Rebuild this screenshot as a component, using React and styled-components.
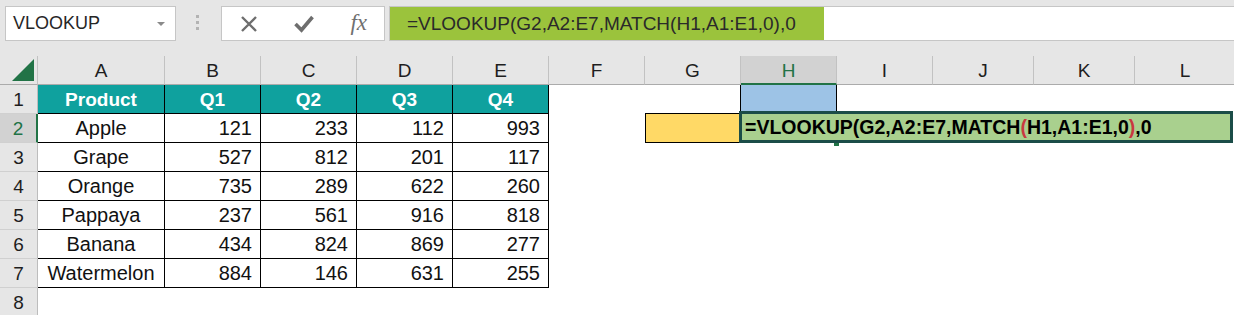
import React from "react";
import styled, { createGlobalStyle } from "styled-components";

const COLS = "38px 127px 96px 96px 96px 96px 96px 96px 96px 96px 101px 101px 101px";
const LETTERS = ["A", "B", "C", "D", "E", "F", "G", "H", "I", "J", "K", "L"];
const HEAD = ["Product", "Q1", "Q2", "Q3", "Q4"];
const DATA = [
	["Apple", 121, 233, 112, 993],
	["Grape", 527, 812, 201, 117],
	["Orange", 735, 289, 622, 260],
	["Pappaya", 237, 561, 916, 818],
	["Banana", 434, 824, 869, 277],
	["Watermelon", 884, 146, 631, 255],
];
const GREEN = "#217346";

const GlobalStyle = createGlobalStyle`
	body {
		margin: 0;
		background: #fff;
		font-family: "Liberation Sans", Arial, sans-serif;
	}
`

const Window = styled.div`
	width: 1234px;
	height: 315px;
	overflow: hidden;
	background: #fff;
`

const TopBar = styled.div`
	display: flex;
	align-items: flex-start;
	height: 56px;
	box-sizing: border-box;
	padding: 6px 0 0 5px;
	background: #e6e6e6;
`

const NameBox = styled.div`
	display: flex;
	align-items: center;
	justify-content: space-between;
	width: 171px;
	height: 35px;
	box-sizing: border-box;
	padding: 0 10px 0 7px;
	background: #fff;
	border: 1px solid #c6c6c6;
	font-size: 18px;
	color: #262626;
`

const Caret = styled.span`
	width: 0;
	height: 0;
	border-left: 4px solid transparent;
	border-right: 4px solid transparent;
	border-top: 4px solid #8a8a8a;
`

const Grip = styled.div`
	display: flex;
	flex-direction: column;
	gap: 3px;
	margin: 9px 22px 0 20px;
	span {
		width: 3px;
		height: 3px;
		background: #b3b3b3;
	}
`

const ActionBox = styled.div`
	display: flex;
	align-items: center;
	justify-content: space-between;
	width: 164px;
	height: 35px;
	box-sizing: border-box;
	padding: 0 17px 0 18px;
	background: #fff;
	border: 1px solid #c6c6c6;
	margin-right: 4px;
`

const Fx = styled.span`
	font-family: "Liberation Serif", "Times New Roman", serif;
	font-style: italic;
	font-size: 23px;
	color: #707070;
	line-height: 1;
	margin-top: -2px;
`

const FormulaBox = styled.div`
	flex: 1;
	height: 35px;
	box-sizing: border-box;
	background: #fff;
	border: 1px solid #c6c6c6;
	border-right: none;
`

const Highlight = styled.div`
	display: flex;
	align-items: center;
	width: 434px;
	height: 100%;
	box-sizing: border-box;
	padding-left: 17px;
	background: #9bc33c;
	font-size: 19px;
	color: #2a2a2a;
	white-space: nowrap;
`

const Sheet = styled.div`
	position: relative;
`

const Row = styled.div`
	display: grid;
	grid-template-columns: ${COLS};
	height: 29px;
`

const ColHead = styled.div`
	display: flex;
	align-items: center;
	justify-content: center;
	box-sizing: border-box;
	background: ${p => (p.$selected ? "#d2d2d2" : "#e6e6e6")};
	color: ${p => (p.$selected ? GREEN : "#1e1e1e")};
	border-right: 1px solid #c2c2c2;
	border-bottom: ${p => (p.$selected ? `2px solid ${GREEN}` : "1px solid #ababab")};
	font-size: 19px;
	padding-top: 2px;
`

const Corner = styled(ColHead)`
	align-items: flex-end;
	justify-content: flex-end;
	padding: 0 3px 3px 0;
	svg {
		display: block;
	}
`

const RowHead = styled.div`
	display: flex;
	align-items: center;
	justify-content: center;
	box-sizing: border-box;
	background: ${p => (p.$selected ? "#d2d2d2" : "#e6e6e6")};
	color: ${p => (p.$selected ? GREEN : "#1e1e1e")};
	border-right: ${p => (p.$selected ? `2px solid ${GREEN}` : "1px solid #bdbdbd")};
	border-bottom: 1px solid #d0d0d0;
	font-size: 19px;
	padding-top: 1px;
`

const fills = {
	head: "#0fa19e",
	yellow: "#ffd966",
	blue: "#9dc3e6",
};

const Cell = styled.div`
	display: flex;
	align-items: center;
	justify-content: ${p => (p.$align === "right" ? "flex-end" : "center")};
	box-sizing: border-box;
	padding: 1px 8px 0;
	background: ${p => fills[p.$kind] || "#fff"};
	color: ${p => (p.$kind === "head" ? "#fff" : "#111")};
	font-size: ${p => (p.$kind === "head" ? "19px" : "20px")};
	font-weight: ${p => (p.$kind === "head" ? 700 : 400)};
	white-space: nowrap;
	${p => (p.$kind === "head" || p.$kind === "data") && `
		border-right: 1px solid #000;
		border-bottom: 1px solid #000;
	`}
	${p => p.$kind === "yellow" && `
		border: 1px solid #000;
		margin-top: -1px;
	`}
	${p => p.$kind === "blue" && `
		border-left: 1px solid #000;
		border-right: 1px solid #000;
		margin-left: -1px;
	`}
`

const EditBox = styled.div`
	position: absolute;
	left: 739px;
	top: 55px;
	width: 494px;
	height: 32px;
	box-sizing: border-box;
	display: flex;
	align-items: center;
	padding: 1px 0 0 3px;
	background: #a9d08e;
	border: 3px solid #1b4d48;
	font-size: 19.5px;
	font-weight: 700;
	color: #000;
	white-space: nowrap;
`

const Paren = styled.span`
	color: #c9383f;
`

const FillHandle = styled.div`
	position: absolute;
	left: 834px;
	top: 87px;
	width: 5px;
	height: 3px;
	background: ${GREEN};
`

const CrossIcon = () => (
	<svg width="18" height="16" viewBox="0 0 18 16">
		<path d="M2 1 L16 15 M16 1 L2 15" stroke="#6e6e6e" strokeWidth="2.4" fill="none" />
	</svg>
)

const CheckIcon = () => (
	<svg width="20" height="18" viewBox="0 0 20 18">
		<path d="M1.5 9 L7.5 15 L18.5 2" stroke="#6e6e6e" strokeWidth="3.6" fill="none" strokeLinejoin="miter" />
	</svg>
)

const cellKind = (r, c) => {
	if (r === 1 && c < 5) return "head"
	if (r >= 2 && r <= 7 && c < 5) return "data"
	if (r === 1 && c === 7) return "blue"
	if (r === 2 && c === 6) return "yellow"
	return null
}

const cellText = (r, c) => {
	if (r === 1 && c < 5) return HEAD[c]
	if (r >= 2 && r <= 7 && c < 5) return DATA[r - 2][c]
	return ""
}

const App = () => {
	return (
		<Window>
			<GlobalStyle />
			<TopBar>
				<NameBox>
					VLOOKUP
					<Caret />
				</NameBox>
				<Grip>
					<span />
					<span />
					<span />
				</Grip>
				<ActionBox>
					<CrossIcon />
					<CheckIcon />
					<Fx>fx</Fx>
				</ActionBox>
				<FormulaBox>
					<Highlight>=VLOOKUP(G2,A2:E7,MATCH(H1,A1:E1,0),0</Highlight>
				</FormulaBox>
			</TopBar>
			<Sheet>
				<Row>
					<Corner>
						<svg width="22" height="22" viewBox="0 0 22 22">
							<polygon points="22,0 22,22 0,22" fill={GREEN} />
						</svg>
					</Corner>
					{LETTERS.map(l => (
						<ColHead key={l} $selected={l === "H"}>{l}</ColHead>
					))}
				</Row>
				{[1, 2, 3, 4, 5, 6, 7, 8].map(r => (
					<Row key={r}>
						<RowHead $selected={r === 2}>{r}</RowHead>
						{LETTERS.map((l, c) => (
							<Cell
								key={l}
								$kind={cellKind(r, c)}
								$align={r > 1 && c > 0 ? "right" : "center"}
							>
								{cellText(r, c)}
							</Cell>
						))}
					</Row>
				))}
				<FillHandle />
				<EditBox>
					=VLOOKUP(G2,A2:E7,MATCH<Paren>(</Paren>H1,A1:E1,0<Paren>)</Paren>,0
				</EditBox>
			</Sheet>
		</Window>
	)
}

export default App
